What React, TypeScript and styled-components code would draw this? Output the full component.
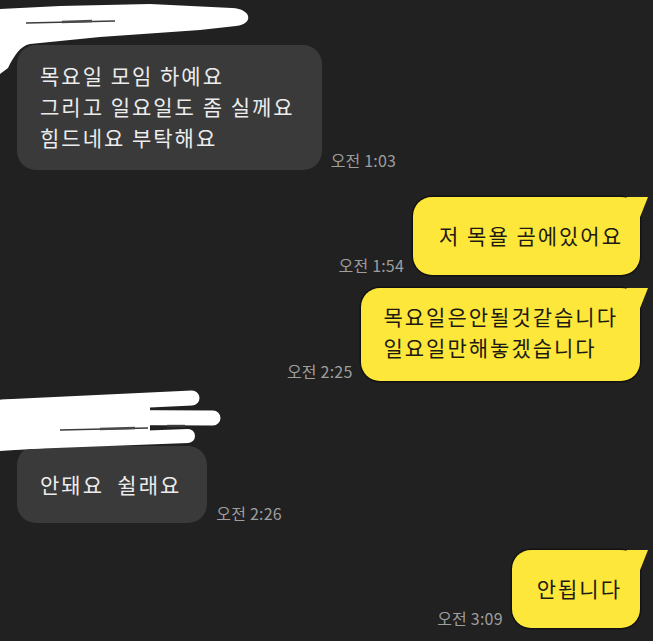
import styled, { createGlobalStyle } from 'styled-components';

const GlobalStyle = createGlobalStyle`
  html, body {
    margin: 0;
    padding: 0;
    background: #212121;
  }
  body {
    font-family: "Noto Sans CJK KR", "Noto Sans", sans-serif;
  }
`;

interface Message {
  mine: boolean;
  text: string;
  time: string;
  gap: number;
  pad: string;
}

const messages: Message[] = [
  {
    mine: false,
    text: '목요일 모임 하예요\n그리고 일요일도 좀 실께요\n힘드네요 부탁해요',
    time: '오전 1:03',
    gap: 0,
    pad: '15px 27px 17px 23px',
  },
  {
    mine: true,
    text: '저 목욜 곰에있어요',
    time: '오전 1:54',
    gap: 27,
    pad: '23px 17px 24px 26px',
  },
  {
    mine: true,
    text: '목요일은안될것같습니다\n일요일만해놓겠습니다',
    time: '오전 2:25',
    gap: 13,
    pad: '13px 22px 18px 22px',
  },
];

const later: Message[] = [
  {
    mine: false,
    text: '안돼요  쉴래요',
    time: '오전 2:26',
    gap: 0,
    pad: '23px 26px 23px 23px',
  },
  {
    mine: true,
    text: '안됩니다',
    time: '오전 3:09',
    gap: 27,
    pad: '23px 18px 24px 25px',
  },
];

const ChatRow = ({ msg }: { msg: Message }) => (
  <Row $mine={msg.mine} $gap={msg.gap}>
    {msg.mine && <Time>{msg.time}</Time>}
    <Bubble $mine={msg.mine} $pad={msg.pad}>
      {msg.text}
    </Bubble>
    {!msg.mine && <Time>{msg.time}</Time>}
  </Row>
);

export default function App() {
  return (
    <>
      <GlobalStyle />
      <Page>
        {/* sender name, scribbled over */}
        <NameBlock $height={45}>
          <svg width="260" height="45" viewBox="0 0 260 45" overflow="visible">
            <path
              d="M0 9 L60 6 L150 4 L232 8 C252 9 254 24 236 26 L200 30 L100 37 L30 44 C20 46 14 56 8 68 L0 74 Z"
              fill="#fff"
            />
            <path d="M26 23 L115 21" stroke="#3c3c3c" strokeWidth="1.6" />
            <path d="M62 22 L92 21" stroke="#4a4a4a" strokeWidth="2.6" />
          </svg>
        </NameBlock>
        {messages.map((m, i) => (
          <ChatRow key={i} msg={m} />
        ))}
        <NameBlock $height={65}>
          <svg width="230" height="65" viewBox="0 0 230 65" overflow="visible">
            <path d="M0 19 L150 14 L150 60 L0 70 Z" fill="#fff" />
            <path
              d="M2 26 L192 17"
              stroke="#fff"
              strokeWidth="15"
              strokeLinecap="round"
            />
            <path
              d="M2 36 L213 37"
              stroke="#fff"
              strokeWidth="15"
              strokeLinecap="round"
            />
            <path
              d="M2 62 L188 55"
              stroke="#fff"
              strokeWidth="14"
              strokeLinecap="round"
            />
            <path d="M60 49 L148 47" stroke="#3a3a3a" strokeWidth="1.6" />
            <path d="M100 48 L135 47" stroke="#4a4a4a" strokeWidth="2.6" />
            <path d="M167 45 L185 45" stroke="#3a3a3a" strokeWidth="2.4" />
          </svg>
        </NameBlock>
        {later.map((m, i) => (
          <ChatRow key={i} msg={m} />
        ))}
      </Page>
    </>
  );
}

const Page = styled.div`
  width: 653px;
  height: 641px;
  overflow: hidden;
  display: flex;
  flex-direction: column;
  background: #212121;
`;

const NameBlock = styled.div<{ $height: number }>`
  position: relative;
  z-index: 1;
  height: ${({ $height }) => $height}px;

  svg {
    display: block;
  }
`;

const Row = styled.div<{ $mine: boolean; $gap: number }>`
  display: flex;
  align-items: flex-end;
  justify-content: ${({ $mine }) => ($mine ? 'flex-end' : 'flex-start')};
  gap: 9px;
  margin-top: ${({ $gap }) => $gap}px;
  padding: ${({ $mine }) => ($mine ? '0 13px 0 0' : '0 0 0 17px')};
`;

const Bubble = styled.div<{ $mine: boolean; $pad: string }>`
  position: relative;
  padding: ${({ $pad }) => $pad};
  border-radius: 19px;
  background: ${({ $mine }) => ($mine ? '#fde73a' : '#3a3a3a')};
  color: ${({ $mine }) => ($mine ? '#1c1a12' : '#ececec')};
  box-shadow: ${({ $mine }) => ($mine ? '0 0 0 1.5px #121212' : 'none')};
  font-size: 21px;
  line-height: 31px;
  letter-spacing: 2px;
  white-space: pre;

  &::after {
    content: '';
    display: ${({ $mine }) => ($mine ? 'block' : 'none')};
    position: absolute;
    top: 0;
    right: -8px;
    width: 22px;
    height: 20px;
    background: #fde73a;
    clip-path: polygon(0 0, 100% 0, 64% 100%);
  }
`;

const Time = styled.span`
  padding-bottom: 1px;
  font-size: 16px;
  line-height: 18px;
  letter-spacing: 0.2px;
  color: #9e9e9e;
  white-space: nowrap;
`;
